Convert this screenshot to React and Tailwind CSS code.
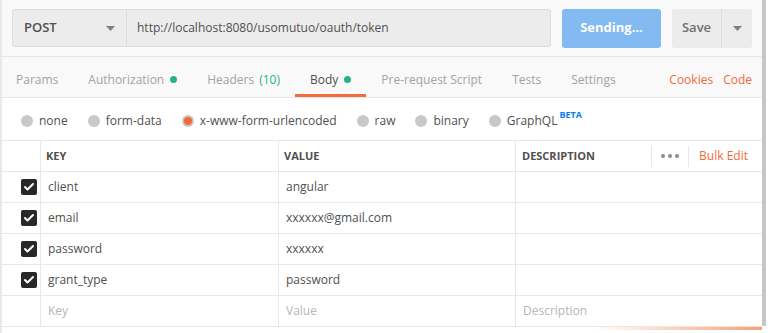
import { Check } from "lucide-react";

const tabs = [
  { label: "Params" },
  { label: "Authorization", dot: true },
  { label: "Headers", count: "(10)" },
  { label: "Body", dot: true, active: true },
  { label: "Pre-request Script" },
  { label: "Tests" },
  { label: "Settings" },
];

const bodyTypes = ["none", "form-data", "x-www-form-urlencoded", "raw", "binary", "GraphQL"];

const rows = [
  { key: "client", value: "angular" },
  { key: "email", value: "xxxxxx@gmail.com" },
  { key: "password", value: "xxxxxx" },
  { key: "grant_type", value: "password" },
];

const Caret = () => (
  <svg width="9" height="5" viewBox="0 0 9 5">
    <path d="M0 0h9L4.5 5z" fill="#808080" />
  </svg>
);

const CheckBox = () => (
  <div className="w-4 h-4 rounded-[2px] bg-[#282828] flex items-center justify-center">
    <Check size={12} strokeWidth={4} color="white" />
  </div>
);

export default function App() {
  return (
    <div className="w-[768px] h-[333px] bg-white flex overflow-hidden font-['Open_Sans',sans-serif] text-[12px] text-[#505050]">
      <div className="w-[762px] border-l-2 border-[#e8e8e8] flex flex-col">
        {/* request bar */}
        <div className="h-[57px] bg-[#f9f9f9] border-b border-[#e8e8e8] flex items-center pl-[10px] pr-[8px] gap-[11px]">
          <div className="flex h-[38px] w-[539px]">
            <div className="w-[115px] flex items-center justify-between pl-[11px] pr-[11px] bg-[#ececec] border border-[#dcdcdc] rounded-l-[3px]">
              <span className="text-[13px] font-semibold text-[#505050]">POST</span>
              <Caret />
            </div>
            <div className="flex-1 flex items-center pl-[10px] bg-[#ececec] border border-l-0 border-[#dcdcdc] rounded-r-[3px] text-[12px]">
              http://localhost:8080/usomutuo/oauth/token
            </div>
          </div>
          <div className="w-[99px] h-[39px] rounded-[3px] bg-[#84baf2] text-white font-bold text-[13px] flex items-center justify-center">
            Sending...
          </div>
          <div className="w-[80px] h-[39px] rounded-[3px] bg-[#ececec] flex">
            <div className="w-[50px] flex items-center justify-center text-[13px] font-semibold text-[#707070] border-r border-[#dcdcdc]">
              Save
            </div>
            <div className="flex-1 flex items-center justify-center">
              <Caret />
            </div>
          </div>
        </div>

        {/* tabs */}
        <div className="h-[41px] bg-[#f9f9f9] border-b border-[#e8e8e8] flex items-stretch pr-[10px]">
          {tabs.map((t) => (
            <div
              key={t.label}
              className={`px-[15px] first:pl-[14px] pt-[8px] flex items-center gap-[6px] border-b-[3px] ${
                t.active ? "border-[#f26b3a] text-[#505050]" : "border-transparent text-[#a3a3a3]"
              }`}
            >
              <span>{t.label}</span>
              {t.count && <span className="text-[#26b47f] -ml-[1px]">{t.count}</span>}
              {t.dot && <span className="w-[7px] h-[7px] rounded-full bg-[#26b47f]" />}
            </div>
          ))}
          <div className="ml-auto pt-[5px] flex items-center gap-[10px] text-[#f26b3a]">
            <span>Cookies</span>
            <span>Code</span>
          </div>
        </div>

        {/* body types */}
        <div className="h-[42px] pt-[4px] flex items-center pl-[19px] gap-[20px]">
          {bodyTypes.map((b) => (
            <div key={b} className="flex items-center gap-[6px]">
              {b === "x-www-form-urlencoded" ? (
                <span className="w-[12px] h-[12px] rounded-full bg-[#c8c8c8] flex items-center justify-center">
                  <span className="w-[8px] h-[8px] rounded-full bg-[#f26b3a]" />
                </span>
              ) : (
                <span className="w-[12px] h-[12px] rounded-full bg-[#c8c8c8]" />
              )}
              <span>{b}</span>
              {b === "GraphQL" && (
                <span className="text-[9px] font-bold text-[#097bed] -mt-[12px] -ml-[4px]">BETA</span>
              )}
            </div>
          ))}
        </div>

        {/* table */}
        <div className="border-t border-[#e8e8e8]">
          <div className="h-[31px] flex border-b border-[#e8e8e8] text-[11px] font-bold">
            <div className="w-[39px] border-r border-[#e8e8e8]" />
            <div className="w-[238px] border-r border-[#e8e8e8] flex items-center pl-[5px]">KEY</div>
            <div className="w-[237px] border-r border-[#e8e8e8] flex items-center pl-[5px]">VALUE</div>
            <div className="flex-1 flex items-center pl-[6px]">
              <span>DESCRIPTION</span>
              <div className="ml-auto flex items-center h-full pr-[14px]">
                <div className="w-px h-[21px] bg-[#e8e8e8]" />
                <div className="flex gap-[3px] px-[9px]">
                  <span className="w-[4px] h-[4px] rounded-full bg-[#8c8c8c]" />
                  <span className="w-[4px] h-[4px] rounded-full bg-[#8c8c8c]" />
                  <span className="w-[4px] h-[4px] rounded-full bg-[#8c8c8c]" />
                </div>
                <div className="w-px h-[21px] bg-[#e8e8e8]" />
                <span className="pl-[10px] text-[12px] font-normal text-[#f26b3a]">Bulk Edit</span>
              </div>
            </div>
          </div>
          {rows.map((r) => (
            <div key={r.key} className="h-[31px] flex border-b border-[#e8e8e8]">
              <div className="w-[39px] border-r border-[#e8e8e8] flex items-center justify-end pr-[3px]">
                <CheckBox />
              </div>
              <div className="w-[238px] border-r border-[#e8e8e8] flex items-center pl-[7px]">{r.key}</div>
              <div className="w-[237px] border-r border-[#e8e8e8] flex items-center pl-[7px]">{r.value}</div>
              <div className="flex-1" />
            </div>
          ))}
          <div className="h-[31px] flex border-b border-[#e8e8e8] text-[#b5b5b5]">
            <div className="w-[39px] border-r border-[#e8e8e8]" />
            <div className="w-[238px] border-r border-[#e8e8e8] flex items-center pl-[7px]">Key</div>
            <div className="w-[237px] border-r border-[#e8e8e8] flex items-center pl-[7px]">Value</div>
            <div className="flex-1 flex items-center pl-[7px]">Description</div>
          </div>
        </div>
        <div className="h-[3px] bg-gradient-to-r from-transparent from-[78%] to-[#f7a072]" />
      </div>
      <div className="w-[4px] h-[326px] bg-[#c6c6c6]" />
    </div>
  );
}
